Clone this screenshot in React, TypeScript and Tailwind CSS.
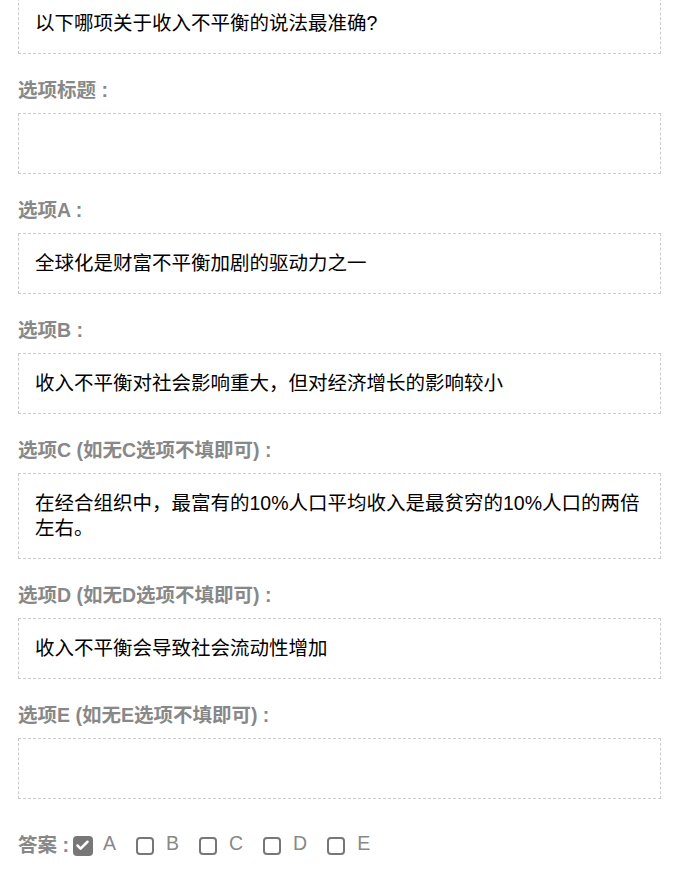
import { Check } from "lucide-react";

const font = { fontFamily: '"Liberation Sans", "Noto Sans CJK SC", sans-serif' };

const Field = ({ label, value }: { label: string; value?: string }) => (
  <>
    <div className="mt-[24px] mb-[10px] text-[19.5px] leading-[25px] font-bold text-[#888]">{label}</div>
    <div className="min-h-[61px] border border-dashed border-[#ccc] px-[16px] py-[17px] text-[19.5px] leading-[25px] text-black">
      {value}
    </div>
  </>
);

const Option = ({ letter, checked }: { letter: string; checked?: boolean }) => (
  <div className="flex items-center mr-[20px]">
    {checked ? (
      <span className="mr-[10px] flex h-[20px] w-[20px] items-center justify-center rounded-[4px] bg-[#777]">
        <Check className="h-[15px] w-[15px] text-white" strokeWidth={4} />
      </span>
    ) : (
      <span className="mr-[12px] h-[18px] w-[18px] rounded-[4px] border-2 border-[#777]" />
    )}
    <span className="mb-[5px] text-[19.5px] leading-[22px] text-[#888]">{letter}</span>
  </div>
);

export default function App() {
  return (
    <div className="min-h-screen bg-white pl-[18px] pr-[36px]" style={font}>
      {/* question text, top cut off */}
      <div className="-mt-[7px] min-h-[61px] border border-dashed border-[#ccc] px-[16px] py-[17px] text-[19.5px] leading-[25px] text-black">
        以下哪项关于收入不平衡的说法最准确?
      </div>

      <Field label="选项标题 :" />
      <Field label="选项A :" value="全球化是财富不平衡加剧的驱动力之一" />
      <Field label="选项B :" value="收入不平衡对社会影响重大，但对经济增长的影响较小" />
      <Field
        label="选项C (如无C选项不填即可) :"
        value="在经合组织中，最富有的10%人口平均收入是最贫穷的10%人口的两倍左右。"
      />
      <Field label="选项D (如无D选项不填即可) :" value="收入不平衡会导致社会流动性增加" />
      <Field label="选项E (如无E选项不填即可) :" />

      {/* answer */}
      <div className="mt-[33px] flex items-center pb-[20px]">
        <span className="mr-[4px] text-[19.5px] leading-[25px] font-bold text-[#888]">答案 :</span>
        <Option letter="A" checked />
        <Option letter="B" />
        <Option letter="C" />
        <Option letter="D" />
        <Option letter="E" />
      </div>
    </div>
  );
}
